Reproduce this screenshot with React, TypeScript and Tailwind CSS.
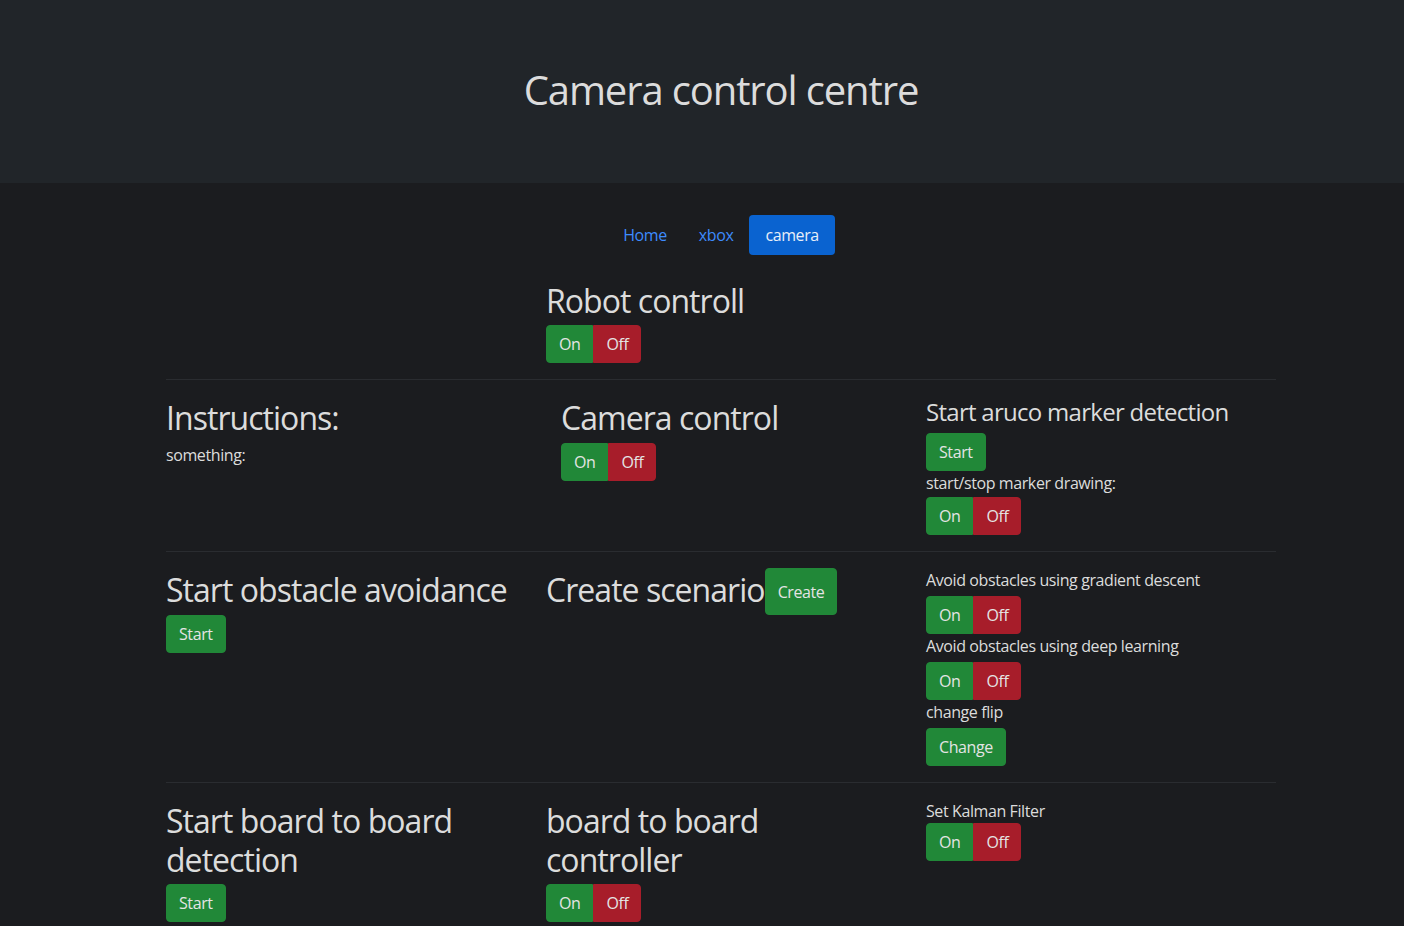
const font = { fontFamily: '"Open Sans", "Noto Sans", sans-serif' };

const Toggle = () => (
  <div className="inline-flex">
    <button className="h-[38px] px-3 text-base leading-6 rounded-l border border-[#218838] bg-[#218838] text-[#e4e4e4]">On</button>
    <button className="h-[38px] px-3 text-base leading-6 rounded-r border border-[#a71d2a] bg-[#a71d2a] text-[#e4e4e4]">Off</button>
  </div>
);

const GreenButton = ({ label }: { label: string }) => (
  <button className="h-[38px] px-3 text-base leading-6 rounded border border-[#218838] bg-[#218838] text-[#e4e4e4]">{label}</button>
);

const Divider = () => <hr className="my-4 border-0 border-t border-[#2a2c30]" />;

const H2 = ({ children }: { children: React.ReactNode }) => (
  <h2 className="text-[32px] leading-[1.2] font-normal tracking-[-0.03em] pt-[3px] mb-[5px]">{children}</h2>
);

const Label = ({ children }: { children: React.ReactNode }) => (
  <div className="text-base leading-6">{children}</div>
);

export default function App() {
  return (
    <div className="w-full min-h-screen overflow-hidden bg-[#1b1c1f] tracking-[-0.025em]" style={font}>
      <div className="w-[1442px] text-[#dcdcdc] pb-10">
        <header className="h-[183px] bg-[#212529] flex items-center justify-center">
          <h1 className="text-[40px] leading-[1.2] font-normal tracking-[-0.028em] -mt-1">Camera control centre</h1>
        </header>

        <div className="w-[1140px] mx-auto px-[15px]">
          <nav className="mt-8 flex justify-center">
            <a className="px-4 py-2 leading-6 text-[#3d8bfd]">Home</a>
            <a className="px-4 py-2 leading-6 text-[#3d8bfd]">xbox</a>
            <a className="px-4 py-2 leading-6 rounded bg-[#0a63d0] text-[#e8eef8]">camera</a>
          </nav>

          <div className="grid grid-cols-3 gap-x-[30px] mt-6">
            <div />
            <div>
              <H2>Robot controll</H2>
              <Toggle />
            </div>
            <div />
          </div>

          <Divider />

          <div className="grid grid-cols-3 gap-x-[30px]">
            <div>
              <H2>Instructions:</H2>
              <p className="text-base leading-6">something:</p>
            </div>
            <div className="pl-[15px]">
              <H2>Camera control</H2>
              <Toggle />
            </div>
            <div>
              <h4 className="text-2xl leading-[1.2] font-normal tracking-[-0.03em] pt-[2px] mb-[6px]">Start aruco marker detection</h4>
              <GreenButton label="Start" />
              <Label>start/stop marker drawing:</Label>
              <div className="mt-0.5">
                <Toggle />
              </div>
            </div>
          </div>

          <Divider />

          <div className="grid grid-cols-3 gap-x-[30px]">
            <div>
              <H2>Start obstacle avoidance</H2>
              <GreenButton label="Start" />
            </div>
            <div className="flex items-stretch">
              <H2>Create scenario</H2>
              <div>
                <button className="h-[47px] px-3 text-base leading-6 rounded border border-[#218838] bg-[#218838] text-[#e4e4e4]">Create</button>
              </div>
            </div>
            <div>
              <Label>Avoid obstacles using gradient descent</Label>
              <div className="mt-1">
                <Toggle />
              </div>
              <Label>Avoid obstacles using deep learning</Label>
              <div className="mt-1">
                <Toggle />
              </div>
              <Label>change flip</Label>
              <div className="mt-1">
                <GreenButton label="Change" />
              </div>
            </div>
          </div>

          <Divider />

          <div className="grid grid-cols-3 gap-x-[30px]">
            <div>
              <H2>Start board to board detection</H2>
              <GreenButton label="Start" />
            </div>
            <div>
              <H2>board to board controller</H2>
              <Toggle />
            </div>
            <div>
              <Label>Set Kalman Filter</Label>
              <Toggle />
            </div>
          </div>
        </div>
      </div>
    </div>
  );
}
